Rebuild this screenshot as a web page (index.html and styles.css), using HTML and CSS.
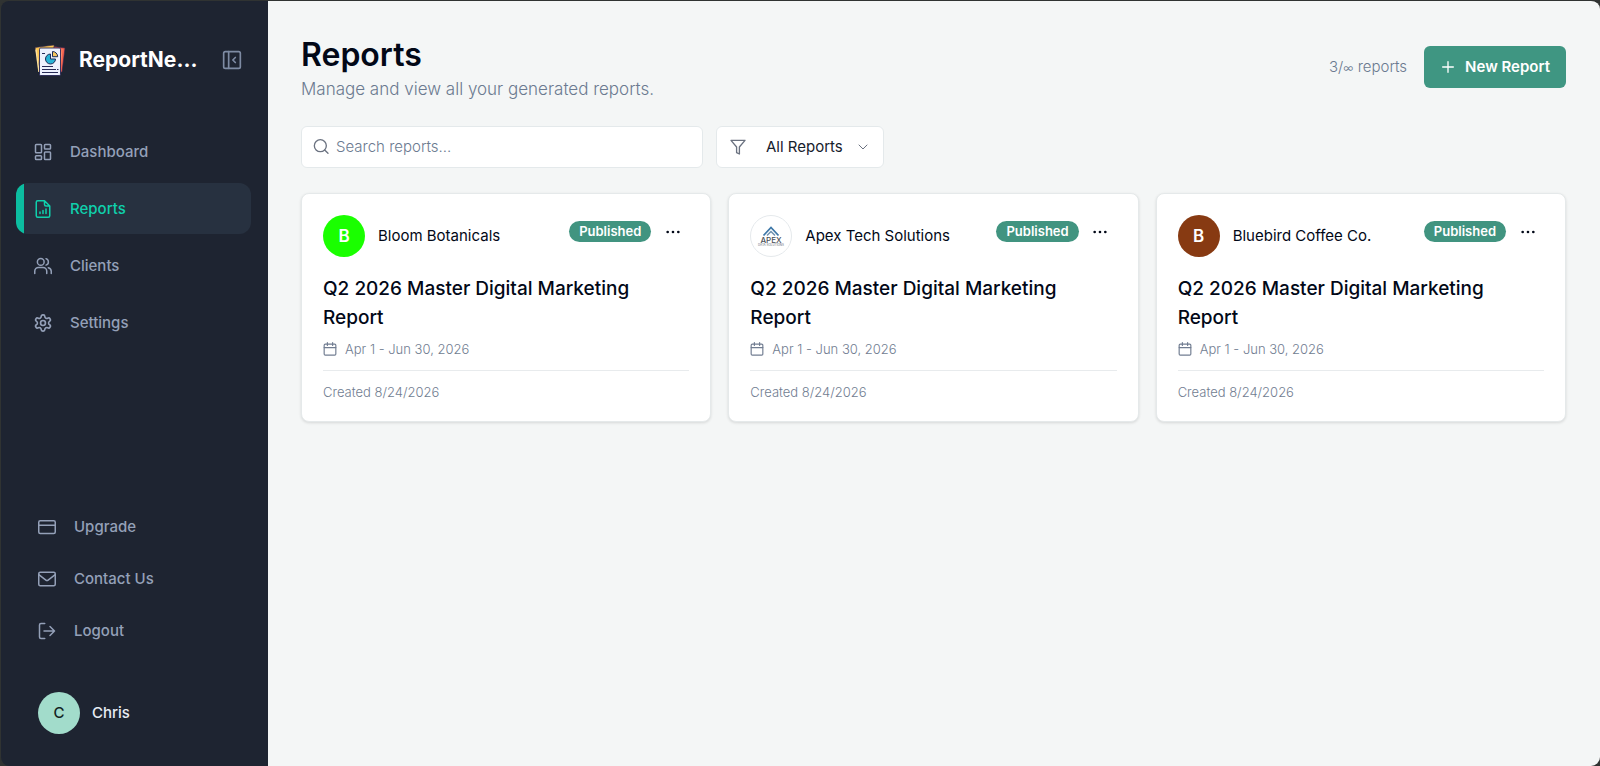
FILE: index.html
```html
<!DOCTYPE html>
<html lang="en">
<head>
<meta charset="utf-8">
<meta name="viewport" content="width=device-width, initial-scale=1">
<title>Reports</title>
<link rel="stylesheet" href="styles.css">
</head>
<body>
<svg class="sprite" aria-hidden="true">
  <symbol id="calendar" viewBox="0 0 24 24"><path d="M7.500 1v5M16.500 1v5M2 9.500h20"/><rect x="2" y="3.500" width="20" height="19" rx="2"/></symbol>
  <symbol id="dots" viewBox="0 0 24 24"><circle cx="12" cy="12" r="1"/><circle cx="20" cy="12" r="1"/><circle cx="4" cy="12" r="1"/></symbol>
</svg>
<div class="app">
  <aside class="sidebar">
    <div class="brand">
      <svg class="brand-logo" viewBox="0 0 32 32" aria-hidden="true">
        <path d="M1 3.500 20 1l3 24-17 3z" fill="#fcc552" stroke="#2b2350" stroke-width=".6"/>
        <path d="M2 5.500 5 28" stroke="#ffe29a" stroke-width="1.500"/>
        <path d="M20 2.500 31 4l-3 24-8 1z" fill="#f2604d" stroke="#2b2350" stroke-width=".6"/>
        <path d="M28 5 26 27" stroke="#ff8d6b" stroke-width="1"/>
        <rect x="5.500" y="4" width="21" height="27.500" rx="1.200" fill="#edf1fd" stroke="#252554" stroke-width=".9"/>
        <path d="M16.500 10a5 5 0 1 0 5 5h-5z" fill="#28b3d5" stroke="#1c2c58" stroke-width="1"/>
        <path d="M18.500 7.500v5.200h5.200a5.200 5.200 0 0 0-5.200-5.200z" fill="#f7c65c" stroke="#1c2c58" stroke-width="1"/>
        <path d="M8 9.500h3M8 22.500h11M8 25.500h14M23 25.500h1.500M8 28.500h16" stroke="#262a56" stroke-width="1.100"/>
      </svg>
      <span class="brand-name">ReportNe...</span>
      <button class="collapse" type="button" aria-label="Collapse sidebar">
        <svg class="icon icon-lg" viewBox="0 0 24 24"><rect x="2" y="2" width="20" height="20" rx="2"/><path d="M8 2v20M16 9l-3 3 3 3"/></svg>
      </button>
    </div>
    <nav class="nav" aria-label="Main">
      <a class="nav-link" href="#dashboard">
        <svg class="icon icon-md" viewBox="0 0 24 24"><rect x="2" y="2" width="8" height="11" rx="1"/><rect x="14" y="2" width="8" height="6" rx="1"/><rect x="14" y="12" width="8" height="10" rx="1"/><rect x="2" y="17" width="8" height="5" rx="1"/></svg>
        Dashboard</a>
      <a class="nav-link active" href="#reports" aria-current="page">
        <svg class="icon icon-md" viewBox="0 0 24 24"><path d="M14 1H5a2 2 0 0 0-2 2v18a2 2 0 0 0 2 2h14a2 2 0 0 0 2-2V8zM14 1v5a2 2 0 0 0 2 2h5M8 18v-2M12 18v-4M16 18v-6"/></svg>
        Reports</a>
      <a class="nav-link" href="#clients">
        <svg class="icon icon-md" viewBox="0 0 24 24"><path d="M17 22v-3a5 5 0 0 0-5-5H6a5 5 0 0 0-5 5v3M23 22v-3a5 5 0 0 0-4-4.800M16 2.200a4.500 4.500 0 0 1 0 8.600"/><circle cx="9" cy="6.500" r="4.500"/></svg>
        Clients</a>
      <a class="nav-link" href="#settings">
        <svg class="icon icon-md" viewBox="1 1 22 22"><path d="M12.220 2h-.44a2 2 0 0 0-2 2v.18a2 2 0 0 1-1 1.730l-.43.25a2 2 0 0 1-2 0l-.15-.08a2 2 0 0 0-2.730.73l-.22.38a2 2 0 0 0 .73 2.730l.15.1a2 2 0 0 1 1 1.720v.51a2 2 0 0 1-1 1.740l-.15.09a2 2 0 0 0-.73 2.730l.22.38a2 2 0 0 0 2.730.73l.15-.08a2 2 0 0 1 2 0l.43.25a2 2 0 0 1 1 1.730V20a2 2 0 0 0 2 2h.44a2 2 0 0 0 2-2v-.18a2 2 0 0 1 1-1.730l.43-.25a2 2 0 0 1 2 0l.15.08a2 2 0 0 0 2.730-.73l.22-.39a2 2 0 0 0-.73-2.730l-.15-.08a2 2 0 0 1-1-1.740v-.5a2 2 0 0 1 1-1.740l.15-.09a2 2 0 0 0 .73-2.730l-.22-.38a2 2 0 0 0-2.730-.73l-.15.08a2 2 0 0 1-2 0l-.43-.25a2 2 0 0 1-1-1.730V4a2 2 0 0 0-2-2z"/><circle cx="12" cy="12" r="3"/></svg>
        Settings</a>
    </nav>
    <div class="account">
      <a class="sub-link" href="#upgrade">
        <svg class="icon icon-md" viewBox="0 0 24 24"><rect x="1" y="3.500" width="22" height="17" rx="2"/><path d="M1 9.500h22"/></svg>
        Upgrade</a>
      <a class="sub-link" href="#contact">
        <svg class="icon icon-md" viewBox="0 0 24 24"><rect x="1" y="3" width="22" height="18" rx="2"/><path d="m1.500 6.500 9 7a2.500 2.500 0 0 0 3 0l9-7"/></svg>
        Contact Us</a>
      <button class="sub-link" type="button">
        <svg class="icon icon-md" viewBox="0 0 24 24"><path d="M9 2H4a2 2 0 0 0-2 2v16a2 2 0 0 0 2 2h5M8 12h14M16 6l6 6-6 6"/></svg>
        Logout</button>
    </div>
    <div class="user"><span class="avatar avatar-user">C</span><span>Chris</span></div>
  </aside>

  <main class="main">
    <header class="page-head">
      <div>
        <h1 class="page-title">Reports</h1>
        <p class="page-sub">Manage and view all your generated reports.</p>
      </div>
      <div class="head-actions">
        <span class="quota">3/<span class="infinity">∞</span> reports</span>
        <button class="new-report" type="button">
          <svg class="icon icon-sm" viewBox="0 0 24 24"><path d="M4 12h16M12 4v16"/></svg>
          New Report</button>
      </div>
    </header>

    <div class="filters">
      <label class="search">
        <svg class="icon icon-sm" viewBox="0 0 24 24"><circle cx="11" cy="10" r="9"/><path d="m22.500 21.500-5-5"/></svg>
        <input class="search-input" type="text" placeholder="Search reports..." aria-label="Search reports">
      </label>
      <label class="status">
        <svg class="icon icon-sm" viewBox="0 0 24 24"><path d="M22.500 2h-21l8.400 10v8.500l4.200 2V12z"/></svg>
        <select class="status-select" aria-label="Report status"><option>All Reports</option></select>
        <svg class="icon chevron" viewBox="0 0 12 12"><path d="m2 4 4 4 4-4"/></svg>
      </label>
    </div>

    <section class="cards" aria-label="Reports">
      <article class="card">
        <div class="card-head">
          <span class="avatar avatar-bloom">B</span>
          <span class="client">Bloom Botanicals</span>
          <span class="card-tools"><span class="badge">Published</span><button class="more" type="button" aria-label="More options"><svg class="icon icon-sm"><use href="#dots"/></svg></button></span>
        </div>
        <h2 class="card-title">Q2 2026 Master Digital Marketing Report</h2>
        <p class="period"><svg class="icon icon-xs"><use href="#calendar"/></svg>Apr 1 - Jun 30, 2026</p>
        <p class="created">Created 8/24/2026</p>
      </article>
      <article class="card">
        <div class="card-head">
          <span class="avatar avatar-apex">
            <svg class="apex-logo" viewBox="0 0 40 40" role="img" aria-label="Apex Data Solutions">
              <path d="m12.500 19.500 7.500-8 7.500 8" fill="none" stroke="#3f78a8" stroke-width="1.800"/>
              <path d="m16 19.500 4-4 4 4" fill="none" stroke="#7193b0" stroke-width="1.500"/>
              <text class="apex-name" x="20" y="27" text-anchor="middle">APEX</text>
              <text class="apex-tag" x="20" y="30" text-anchor="middle">DATA SOLUTIONS</text>
            </svg>
          </span>
          <span class="client">Apex Tech Solutions</span>
          <span class="card-tools"><span class="badge">Published</span><button class="more" type="button" aria-label="More options"><svg class="icon icon-sm"><use href="#dots"/></svg></button></span>
        </div>
        <h2 class="card-title">Q2 2026 Master Digital Marketing Report</h2>
        <p class="period"><svg class="icon icon-xs"><use href="#calendar"/></svg>Apr 1 - Jun 30, 2026</p>
        <p class="created">Created 8/24/2026</p>
      </article>
      <article class="card">
        <div class="card-head">
          <span class="avatar avatar-bluebird">B</span>
          <span class="client">Bluebird Coffee Co.</span>
          <span class="card-tools"><span class="badge">Published</span><button class="more" type="button" aria-label="More options"><svg class="icon icon-sm"><use href="#dots"/></svg></button></span>
        </div>
        <h2 class="card-title">Q2 2026 Master Digital Marketing Report</h2>
        <p class="period"><svg class="icon icon-xs"><use href="#calendar"/></svg>Apr 1 - Jun 30, 2026</p>
        <p class="created">Created 8/24/2026</p>
      </article>
    </section>
  </main>
</div>
</body>
</html>
```
FILE: styles.css
```css
* { box-sizing: border-box; }

body {
  margin: 0;
  background: #303332;
  color: #020817;
  font-family: Inter, "Liberation Sans", sans-serif;
  font-size: 15px;
  line-height: 20px;
}

h1, h2, p { margin: 0; }
button, input, select { font: inherit; color: inherit; }
button { border: 0; padding: 0; background: none; cursor: pointer; }
a { color: inherit; text-decoration: none; }

.sprite { position: absolute; width: 0; height: 0; }

.icon {
  flex: none;
  fill: none;
  stroke: currentColor;
  stroke-width: 2;
  stroke-linecap: round;
  stroke-linejoin: round;
}
.icon-xs { width: 14px; height: 14px; }
.icon-sm { width: 16px; height: 16px; }
.icon-md { width: 18px; height: 18px; }
.icon-lg { width: 20px; height: 20px; }

.app {
  display: flex;
  min-height: 100vh;
  border-top: 1px solid #303332;
  border-left: 1px solid #303332;
  border-radius: 9px;
  overflow: hidden;
}

/* Sidebar */
.sidebar {
  display: flex;
  flex-direction: column;
  flex: none;
  width: 267px;
  padding: 42px 17px 32px 15px;
  background: #1e2431;
  color: #94a0b8;
  font-weight: 500;
}
.brand {
  display: flex;
  align-items: center;
  gap: 13px;
  padding: 0 9px 0 18px;
}
.brand-logo { flex: none; width: 32px; height: 34px; }
.brand-name {
  flex: 1;
  color: #fff;
  font-size: 21px;
  font-weight: 700;
  line-height: 34px;
}
.collapse { display: flex; color: #7e8ba3; }

.nav {
  display: flex;
  flex-direction: column;
  gap: 6px;
  margin-top: 49px;
}
.nav-link {
  display: flex;
  align-items: center;
  gap: 18px;
  min-height: 51px;
  padding: 0 18px;
  border-radius: 12px;
}
.nav-link.active {
  background: linear-gradient(to right, #0cbda0 8px, #273140 8px);
  color: #0fd0ac;
}

.account {
  display: flex;
  flex-direction: column;
  gap: 12px;
  margin-top: auto;
}
.sub-link {
  display: flex;
  align-items: center;
  gap: 18px;
  min-height: 40px;
  padding: 0 22px;
  text-align: left;
}
.user {
  display: flex;
  align-items: center;
  gap: 12px;
  margin-top: 41px;
  padding-left: 22px;
  color: #e8edf5;
}

.avatar {
  display: flex;
  align-items: center;
  justify-content: center;
  flex: none;
  width: 42px;
  height: 42px;
  border-radius: 50%;
  color: #fff;
  font-size: 17px;
  font-weight: 600;
}
.avatar-user { background: #a2dccb; color: #14231f; font-size: 15px; font-weight: 500; }
.avatar-bloom { background: #1aff00; }
.avatar-bluebird { background: #873a12; }
.avatar-apex { border: 1px solid #e5e9ec; background: #fff; }
.apex-logo { width: 40px; height: 40px; }
.apex-name { fill: #4a4f57; font-size: 8px; font-weight: 500; }
.apex-tag { fill: #80868e; font-size: 3px; font-weight: 500; }

/* Page */
.main {
  flex: 1;
  min-width: 0;
  padding: 36px 34px 36px 33px;
  background: #f4f6f6;
}
.page-head {
  display: flex;
  align-items: flex-start;
  justify-content: space-between;
}
.page-title { font-size: 32px; font-weight: 600; line-height: 35px; }
.page-sub {
  margin-top: 5px;
  color: #6b7a90;
  font-size: 17px;
  font-weight: 300;
  line-height: 24px;
}
.head-actions { display: flex; align-items: center; gap: 17px; padding-top: 9px; }
.quota { color: #6b7a90; font-weight: 300; }
.infinity { font-size: 11px; }
.new-report {
  display: flex;
  align-items: center;
  gap: 9px;
  min-height: 42px;
  padding: 0 16px;
  border-radius: 6px;
  background: #3f9682;
  color: #fff;
  font-weight: 600;
}

.filters { display: flex; gap: 13px; margin-top: 25px; }
.search, .status {
  display: flex;
  align-items: center;
  min-height: 42px;
  border: 1px solid #e4e9eb;
  border-radius: 6px;
  background: #fff;
  color: #6b7280;
}
.search { flex: 0 1 402px; gap: 7px; padding: 0 11px; }
.search-input {
  flex: 1;
  min-width: 0;
  padding: 0;
  border: 0;
  outline: 0;
  background: transparent;
}
.search-input::placeholder { color: #6b7a90; font-weight: 300; opacity: 1; }
.status { padding: 0 14px 0 13px; }
.status-select {
  margin: 0 14px 0 20px;
  padding: 0;
  border: 0;
  appearance: none;
  background: transparent;
  color: #16202c;
}
.chevron { width: 12px; height: 12px; stroke-width: 1; }

/* Report cards */
.cards {
  display: grid;
  grid-template-columns: repeat(3, minmax(0, 1fr));
  gap: 17px;
  margin-top: 25px;
}
.card {
  padding: 21px 21px 19px;
  border: 1px solid #e5e9ea;
  border-radius: 8px;
  background: #fff;
  box-shadow: 0 1px 3px rgba(0, 0, 0, .12);
}
.card-head { display: flex; align-items: center; gap: 13px; }
.client { flex: 1; min-width: 0; }
.card-tools { display: flex; align-items: center; align-self: flex-start; gap: 5px; }
.badge {
  padding: 0 10px;
  border-radius: 11px;
  background: #419480;
  color: #fff;
  font-size: 13px;
  font-weight: 600;
  line-height: 21px;
}
.more {
  display: flex;
  align-items: center;
  justify-content: center;
  width: 33px;
  height: 33px;
}
.card-title {
  margin-top: 17px;
  font-size: 19px;
  font-weight: 500;
  line-height: 29px;
}
.period {
  display: flex;
  align-items: center;
  gap: 8px;
  margin-top: 7px;
  color: #717d91;
  font-size: 13px;
  font-weight: 300;
}
.created {
  margin-top: 11px;
  padding-top: 11px;
  border-top: 1px solid #e8ebed;
  color: #717d91;
  font-size: 13px;
  font-weight: 300;
}
```
